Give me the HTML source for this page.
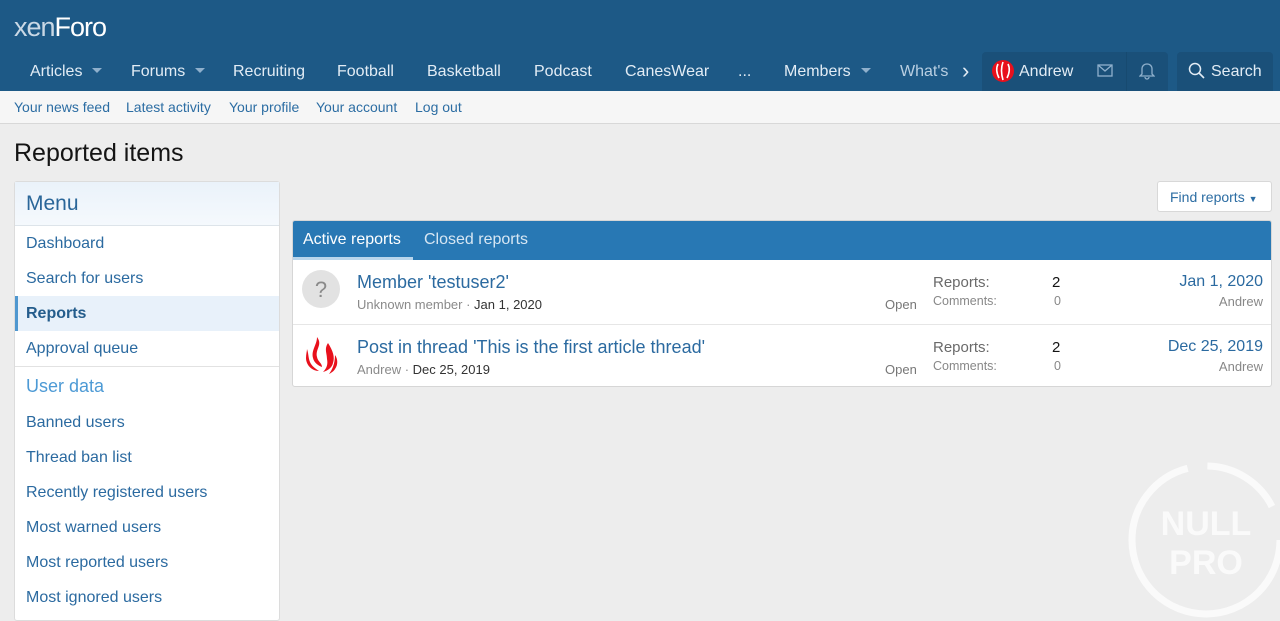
<!DOCTYPE html>
<html><head><meta charset="utf-8"><style>
*{box-sizing:border-box;margin:0;padding:0}
body{width:1280px;height:614px;overflow:hidden;background:#ededed;font-family:"Liberation Sans",Arial,sans-serif;position:relative}
.hdr{height:91px;background:#1d5986}
.logo{position:absolute;left:14px;top:12px;font-size:27px;color:#c9d8e5;letter-spacing:-1px}
.logo b{font-weight:normal;color:#fff}
.nav{position:absolute;top:52px;left:0;right:0;height:39px}
.nav span{position:absolute;top:11px;font-size:16px;color:#e2ecf5}
.tri{display:inline-block;width:0;height:0;border-left:5px solid transparent;border-right:5px solid transparent;border-top:5px solid #8fb0cc;margin-left:10px;vertical-align:3px}
.ublk{position:absolute;left:982px;top:52px;width:186px;height:39px;background:#1a5079;border-radius:4px 4px 0 0}
.sblk{position:absolute;left:1177px;top:52px;width:96px;height:39px;background:#1a5079;border-radius:4px 4px 0 0}
.sub{position:absolute;top:91px;left:0;right:0;height:33px;background:#f6f6f6;border-bottom:1px solid #d8d8d8}
.sub span{position:absolute;top:8px;font-size:14px;color:#2c6da3}
h1{position:absolute;left:14px;top:139px;font-size:25px;font-weight:normal;color:#141414}
.side{position:absolute;left:14px;top:181px;width:266px;height:440px;background:#fff;border:1px solid #dcdcdc;border-radius:3px}
.side .mh{height:44px;background:linear-gradient(#eaf2fa,#f5f9fd);border-bottom:1px solid #dde4ea;font-size:21px;color:#2a6699;padding:10px 11px}
.side .it{height:35px;font-size:16px;color:#2b6aa0;padding:9px 11px 0}
.side .act{background:#e8f1fa;border-left:3px solid #4f97cf;padding-left:8px;font-weight:bold;color:#245d8c}
.side .gh{height:39px;font-size:18px;color:#4d9ad5;padding:9px 11px 0;border-top:1px solid #e2e2e2}
.find{position:absolute;left:1157px;top:181px;width:115px;height:31px;background:#fff;border:1px solid #d8d8d8;border-radius:3px;font-size:14px;color:#2c6da3;padding:7px 12px}
.panel{position:absolute;left:292px;top:220px;width:980px;height:167px;background:#fff;border:1px solid #d6d6d6;border-radius:3px;overflow:hidden}
.tabs{height:39px;background:#2878b4;position:relative}
.tabs span{position:absolute;top:10px;font-size:16px;color:#d6e6f3}
.row{position:relative;height:64px;border-top:1px solid #e6e6e6}
.t{position:absolute;left:64px;top:12px;font-size:18px;color:#2b6aa0}
.m{position:absolute;left:64px;top:37px;font-size:13px;color:#8a8a8a}
.m b{font-weight:normal;color:#333}
.o{position:absolute;left:592px;top:37px;font-size:13px;color:#777}
.r1{position:absolute;left:640px;top:14px;font-size:15px;color:#6a6a6a}
.r2{position:absolute;left:640px;top:34px;font-size:12.5px;color:#888}
.n1{position:absolute;left:759px;top:14px;font-size:15px;color:#141414}
.n2{position:absolute;left:761px;top:34px;font-size:12.5px;color:#888}
.d1{position:absolute;right:8px;top:13px;font-size:16px;color:#2b6aa0}
.d2{position:absolute;right:8px;top:34px;font-size:13px;color:#888}
</style></head><body>
<div class="hdr"></div>
<div class="logo">xen<b>Foro</b></div>
<div class="nav">
<span style="left:30px">Articles<i class="tri"></i></span>
<span style="left:131px">Forums<i class="tri"></i></span>
<span style="left:233px">Recruiting</span>
<span style="left:337px">Football</span>
<span style="left:427px">Basketball</span>
<span style="left:534px">Podcast</span>
<span style="left:625px">CanesWear</span>
<span style="left:738px">...</span>
<span style="left:784px">Members<i class="tri"></i></span>
<span style="left:900px;color:#b9cfe2">What's</span>
<span style="left:962px;font-size:22px;top:6px">›</span>
</div>
<div class="ublk"></div>
<svg style="position:absolute;left:992px;top:60px" width="22" height="22" viewBox="0 0 22 22"><circle cx="11" cy="11" r="11" fill="#e8101c"/><path d="M6 4q-3 6 1 14M11 2q-3 8 0 18M16 4q3 6-1 14" stroke="#fff" stroke-width="1.6" fill="none"/></svg>
<span style="position:absolute;left:1019px;top:63px;font-size:16px;color:#e2ecf5">Andrew</span>
<svg style="position:absolute;left:1097px;top:64px" width="16" height="13"><rect x="1" y="1" width="14" height="11" fill="none" stroke="#8fb0cc" stroke-width="1.3"/><path d="M1 1l7 6 7-6" fill="none" stroke="#8fb0cc" stroke-width="1.3"/></svg>
<div style="position:absolute;left:1126px;top:52px;width:1px;height:39px;background:#174a70"></div>
<svg style="position:absolute;left:1139px;top:62px" width="16" height="18"><path d="M8 2c-3 0-5 2-5 5v5l-2 2h14l-2-2V7c0-3-2-5-5-5zM6 15a2 2 0 004 0" fill="none" stroke="#8fb0cc" stroke-width="1.3"/></svg>
<div class="sblk"></div>
<svg style="position:absolute;left:1188px;top:62px" width="18" height="18"><circle cx="7" cy="7" r="5.5" fill="none" stroke="#e2ecf5" stroke-width="1.5"/><path d="M11 11l5 5" stroke="#e2ecf5" stroke-width="1.6"/></svg>
<span style="position:absolute;left:1211px;top:63px;font-size:16px;color:#e2ecf5">Search</span>
<div class="sub">
<span style="left:14px">Your news feed</span><span style="left:126px">Latest activity</span><span style="left:229px">Your profile</span><span style="left:316px">Your account</span><span style="left:415px">Log out</span>
</div>
<h1>Reported items</h1>
<div class="side">
<div class="mh">Menu</div>
<div class="it">Dashboard</div>
<div class="it">Search for users</div>
<div class="it act">Reports</div>
<div class="it">Approval queue</div>
<div class="gh">User data</div>
<div class="it">Banned users</div>
<div class="it">Thread ban list</div>
<div class="it">Recently registered users</div>
<div class="it">Most warned users</div>
<div class="it">Most reported users</div>
<div class="it">Most ignored users</div>
</div>
<div class="find">Find reports <span style="font-size:9px">▼</span></div>
<div class="panel">
<div class="tabs"><span style="left:10px;color:#fff">Active reports</span><div style="position:absolute;left:0;bottom:0;width:120px;height:3px;background:#b8d5ec"></div><span style="left:131px">Closed reports</span></div>
<div class="row" style="border-top:none">
<svg style="position:absolute;left:9px;top:10px" width="38" height="38"><circle cx="19" cy="19" r="19" fill="#e2e2e2"/><text x="19" y="27" text-anchor="middle" font-size="22" fill="#8a8a8a" font-family="Liberation Sans">?</text></svg>
<div class="t">Member 'testuser2'</div><div class="m">Unknown member · <b>Jan 1, 2020</b></div><div class="o">Open</div>
<div class="r1">Reports:</div><div class="r2">Comments:</div><div class="n1">2</div><div class="n2">0</div>
<div class="d1">Jan 1, 2020</div><div class="d2">Andrew</div></div>
<div class="row">
<svg style="position:absolute;left:10px;top:10px" width="36" height="40" viewBox="0 0 36 40"><path d="M14 2c6 8-2 12 0 20 1 5 5 6 5 10-3-1-8-4-9-9C8 15 14 10 14 2zM4 14c2 6 1 10 4 15 2 3 5 5 8 7-7 0-13-6-13-13 0-4 1-7 1-9zM25 8c5 8 7 14 5 20-1 5-6 8-10 9 4-4 5-8 4-13 0-6-3-10 1-16zM32 20c3 4 3 10 0 14-1 2-4 4-6 5 3-4 6-10 6-19z" fill="#e8101c"/></svg>
<div class="t">Post in thread 'This is the first article thread'</div><div class="m">Andrew · <b>Dec 25, 2019</b></div><div class="o">Open</div>
<div class="r1">Reports:</div><div class="r2">Comments:</div><div class="n1">2</div><div class="n2">0</div>
<div class="d1">Dec 25, 2019</div><div class="d2">Andrew</div></div>
</div>
<svg style="position:absolute;left:1126px;top:460px;opacity:.75" width="160" height="160" viewBox="0 0 160 160"><circle cx="80" cy="80" r="74" fill="none" stroke="#fff" stroke-width="7" stroke-dasharray="330 20 80 40"/><text x="80" y="75" text-anchor="middle" font-size="34" font-weight="bold" fill="#fff" font-family="Liberation Sans">NULL</text><text x="80" y="114" text-anchor="middle" font-size="34" font-weight="bold" fill="#fff" font-family="Liberation Sans">PRO</text></svg>
</body></html>
